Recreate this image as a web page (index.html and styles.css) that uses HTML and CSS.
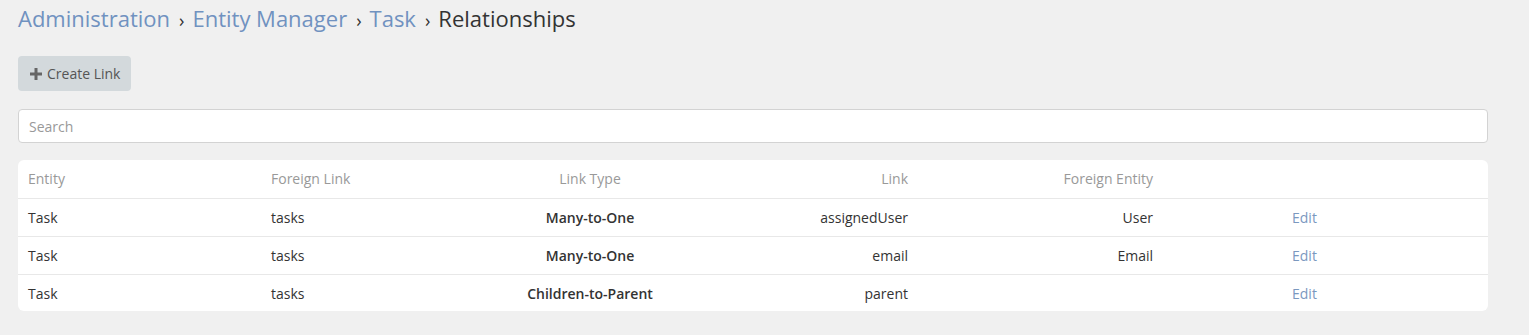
FILE: index.html
```html
<!DOCTYPE html>
<html>
	<head>
		<meta charset="UTF-8">
		<title>Relationships</title>
		<link rel="stylesheet" href="styles.css">
	</head>
	<body>
		<div class="page">
			<h3 class="crumbs">
				<a href="#">Administration</a><span class="sep">›</span><a href="#">Entity Manager</a><span class="sep">›</span><a href="#">Task</a><span class="sep">›</span><span class="cur">Relationships</span>
			</h3>
			<div class="buttons">
				<button class="btn">
					<svg width="14" height="14" viewBox="0 0 14 14"><path d="M5.5 1h3v4.5H13v3H8.5V13h-3V8.5H1v-3h4.5z" fill="#666"/></svg>
					Create Link
				</button>
			</div>
			<input class="search" type="text" placeholder="Search">
			<div class="list">
				<div class="row head">
					<div>Entity</div>
					<div>Foreign Link</div>
					<div class="center">Link Type</div>
					<div class="right">Link</div>
					<div class="right">Foreign Entity</div>
					<div></div>
					<div></div>
				</div>
				<div class="row">
					<div>Task</div>
					<div>tasks</div>
					<div class="center bold">Many-to-One</div>
					<div class="right">assignedUser</div>
					<div class="right">User</div>
					<div></div>
					<div><a href="#">Edit</a></div>
				</div>
				<div class="row">
					<div>Task</div>
					<div>tasks</div>
					<div class="center bold">Many-to-One</div>
					<div class="right">email</div>
					<div class="right">Email</div>
					<div></div>
					<div><a href="#">Edit</a></div>
				</div>
				<div class="row">
					<div>Task</div>
					<div>tasks</div>
					<div class="center bold">Children-to-Parent</div>
					<div class="right">parent</div>
					<div class="right"></div>
					<div></div>
					<div><a href="#">Edit</a></div>
				</div>
			</div>
		</div>
	</body>
</html>
```

FILE: styles.css
```css
body{
	margin: 0;
	background-color: #f0f0f0;
	font-family: "Open Sans", "Liberation Sans", sans-serif;
	font-size: 14px;
	color: #333;
}
a{
	text-decoration: none;
}
.page{
	padding: 0 41px 0 18px;
}
.crumbs{
	margin: 0;
	padding-top: 3px;
	height: 53px;
	font-size: 22px;
	font-weight: normal;
	line-height: 30px;
}
.crumbs a{
	color: #7092c0;
}
.crumbs .sep{
	font-size: 18px;
	margin: 0 8px 0 9px;
	color: #333;
}
.crumbs .cur{
	color: #333;
}
.buttons{
	height: 53px;
}
.btn{
	height: 35px;
	padding: 0 11px 0 11px;
	border: 0;
	border-radius: 4px;
	background-color: #d3d9dc;
	color: #555;
	font-family: inherit;
	font-size: 14px;
	display: flex;
	align-items: center;
	gap: 4px;
}
.search{
	display: block;
	box-sizing: border-box;
	width: 100%;
	height: 34px;
	margin: 0 0 17px;
	padding: 0 10px;
	border: 1px solid #d3d3d3;
	border-radius: 4px;
	background: #fff;
	font-family: inherit;
	font-size: 14px;
}
.search::placeholder{
	color: #999;
}
.list{
	background: #fff;
	border-radius: 6px;
	overflow: hidden;
}
.row{
	display: grid;
	grid-template-columns: 243px 246px 166px 245px 245px 119px 1fr;
	box-sizing: border-box;
	height: 38px;
	align-items: center;
	border-top: 1px solid #e8e8e8;
}
.row:last-child{
	height: 37px;
}
.row.head{
	border-top: 0;
	color: #999;
	padding-bottom: 1px;
}
.row > div{
	padding: 0 10px;
	white-space: nowrap;
}
.row .center{
	text-align: center;
}
.row .right{
	text-align: right;
}
.row .bold{
	font-weight: 600;
}
.row a{
	color: #7b98bf;
}
```
